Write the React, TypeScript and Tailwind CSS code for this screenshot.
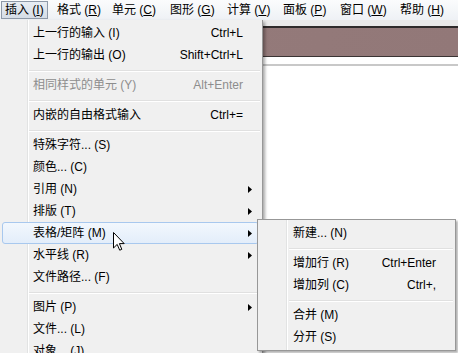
import React from 'react';

type Item =
  | 'sep'
  | { label: string; sc?: string; sub?: boolean; disabled?: boolean; active?: boolean };

const menuBar = [
  { label: '插入', key: 'I', w: 'w-[52px]' },
  { label: '格式', key: 'R', w: 'w-[55px]' },
  { label: '单元', key: 'C', w: 'w-[58px]' },
  { label: '图形', key: 'G', w: 'w-[57px]' },
  { label: '计算', key: 'V', w: 'w-[56px]' },
  { label: '面板', key: 'P', w: 'w-[57px]' },
  { label: '窗口', key: 'W', w: 'w-[60px]' },
  { label: '帮助', key: 'H', w: 'w-[58px]' },
];

const mainItems: Item[] = [
  { label: '上一行的输入 (I)', sc: 'Ctrl+L' },
  { label: '上一行的输出 (O)', sc: 'Shift+Ctrl+L' },
  'sep',
  { label: '相同样式的单元 (Y)', sc: 'Alt+Enter', disabled: true },
  'sep',
  { label: '内嵌的自由格式输入', sc: 'Ctrl+=' },
  'sep',
  { label: '特殊字符... (S)' },
  { label: '颜色... (C)' },
  { label: '引用 (N)', sub: true },
  { label: '排版 (T)', sub: true },
  { label: '表格/矩阵 (M)', sub: true, active: true },
  { label: '水平线 (R)', sub: true },
  { label: '文件路径... (F)' },
  'sep',
  { label: '图片 (P)', sub: true },
  { label: '文件... (L)' },
  { label: '对象... (J)' },
];

const subItems: Item[] = [
  { label: '新建... (N)' },
  'sep',
  { label: '增加行 (R)', sc: 'Ctrl+Enter' },
  { label: '增加列 (C)', sc: 'Ctrl+,' },
  'sep',
  { label: '合并 (M)' },
  { label: '分开 (S)' },
];

function Arrow() {
  return (
    <svg width="4" height="7" viewBox="0 0 4 7" className="block">
      <path d="M0 0 L4 3.5 L0 7 Z" fill="#000" />
    </svg>
  );
}

function MenuRows({ items, pl, sepL, arrowCol }: { items: Item[]; pl: string; sepL: string; arrowCol: string }) {
  return (
    <>
      {items.map((it, i) =>
        it === 'sep' ? (
          <div key={i} className={`h-[8px] pt-[4px] ${sepL} mr-[2px]`}>
            <div className="h-px bg-[#e0e0e0]" />
            <div className="h-px bg-white" />
          </div>
        ) : (
          <div
            key={i}
            className={`ml-[2px] mr-[3px] h-[22px] flex items-center rounded-[3px] border ${
              it.active
                ? 'border-[#a8c8ee] bg-[linear-gradient(to_bottom,#f2f7fd,#e3edfa)]'
                : 'border-transparent'
            } ${it.disabled ? 'text-[#8d8d8d]' : 'text-black'}`}
          >
            <span className={`${pl} flex-1 whitespace-nowrap`}>{it.label}</span>
            {it.sc && <span className="whitespace-nowrap">{it.sc}</span>}
            <span className={`${arrowCol} flex items-center pl-[5px]`}>{it.sub && <Arrow />}</span>
          </div>
        )
      )}
    </>
  );
}

export default function App() {
  return (
    <div
      className="relative w-[458px] h-[353px] overflow-hidden bg-white text-[12px] leading-none"
      style={{ fontFamily: '"Liberation Sans", "Noto Sans CJK SC", sans-serif' }}
    >
      {/* menu bar */}
      <div className="h-[20px] flex bg-[linear-gradient(to_bottom,#fbfcfd,#eef1f5)] text-black">
        {menuBar.map((m, i) =>
          i === 0 ? (
            <div key={m.key} className={`${m.w} pt-[1px]`}>
              <div className="ml-[1px] w-[47px] h-[18px] flex items-center pl-[3px] border border-[#8e99a8] bg-[linear-gradient(to_bottom,#e8edf3,#d5dde7)]">
                {m.label} (<span className="underline">{m.key}</span>)
              </div>
            </div>
          ) : (
            <div key={m.key} className={`${m.w} shrink-0 pl-[5px] flex items-center whitespace-nowrap`}>
              {m.label} (<span className="underline">{m.key}</span>)
            </div>
          )
        )}
      </div>

      {/* document window behind the menu */}
      <div className="flex flex-col">
        <div className="h-[6px] bg-[#e9e9e9]" />
        <div className="h-[2px] bg-[#2e2a2a]" />
        <div className="h-[28px] bg-[linear-gradient(100deg,#9a8080_0%,#ad9797_6%,#9d8585_14%,#947a7a_40%,#927878_100%)]" />
        <div className="h-px bg-[#3a3434]" />
        <div className="h-[7px] bg-white" />
        <div className="h-[2px] bg-[#c8c8c8]" />
        <div className="h-[280px] bg-white" />
      </div>

      {/* insert menu */}
      <div className="absolute left-0 top-[20px] w-[263px] pt-[2px] border-r border-[#979797] shadow-[2px_2px_3px_rgba(0,0,0,0.35)] bg-[linear-gradient(to_right,#f0f0f0_27px,#e2e3e3_27px,#e2e3e3_28px,#ffffff_28px,#ffffff_29px,#f0f0f0_29px)]">
        <MenuRows items={mainItems} pl="pl-[30px]" sepL="ml-[29px]" arrowCol="w-[15px]" />
      </div>

      {/* table / matrix submenu */}
      <div className="absolute left-[257px] top-[219px] w-[199px] border border-[#979797] py-[2px] shadow-[2px_2px_2px_rgba(0,0,0,0.3)] bg-[linear-gradient(to_right,#f0f0f0_28px,#e2e3e3_28px,#e2e3e3_29px,#ffffff_29px,#ffffff_30px,#f0f0f0_30px)]">
        <MenuRows items={subItems} pl="pl-[32px]" sepL="ml-[31px]" arrowCol="w-[15px]" />
      </div>

      {/* mouse pointer */}
      <svg width="12" height="19" viewBox="0 0 12 19" className="absolute left-[113px] top-[232px]">
        <path
          d="M0.5 0.5 L0.5 16 L4.2 12.4 L6.7 18.2 L8.8 17.3 L6.4 11.6 L11.2 11.6 Z"
          fill="#fff"
          stroke="#000"
          strokeWidth="1"
          strokeLinejoin="miter"
        />
      </svg>
    </div>
  );
}
